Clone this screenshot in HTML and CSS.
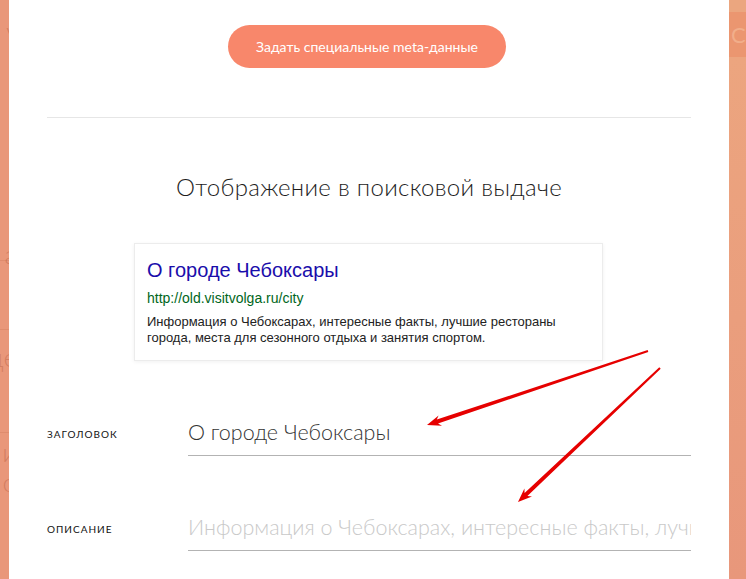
FILE: index.html
```html
<!DOCTYPE html>
<html lang="ru">
<head>
    <meta charset="UTF-8">
    <meta name="viewport" content="width=device-width, initial-scale=1.0">
    <title>Meta-данные страницы</title>
    <link rel="stylesheet" href="styles.css">
</head>
<body>
    <!-- страница под модальным окном -->
    <div class="backdrop">
        <div class="bd-left">
            <span class="bd-word bd-word-top">у</span>
            <span class="bd-rule" style="margin-top: 214px"></span>
            <span class="bd-word" style="margin-top: -22px">а</span>
            <span class="bd-rule" style="margin-top: 60px"></span>
            <span class="bd-word" style="margin-top: 12px">де</span>
            <span class="bd-rule" style="margin-top: 60px"></span>
            <span class="bd-word" style="margin-top: 4px">и</span>
            <span class="bd-word" style="margin-top: 0">о</span>
        </div>
        <div class="bd-right">
            <div class="bd-cap"></div>
            <div class="bd-band">Со</div>
            <div class="bd-rest"></div>
        </div>
    </div>

    <div class="modal">
        <div class="modal-top">
            <button class="meta-button" type="button">Задать специальные meta-данные</button>
        </div>
        <hr class="divider">
        <h2 class="section-title">Отображение в поисковой выдаче</h2>

        <!-- превью сниппета -->
        <div class="snippet">
            <a class="snippet-title" href="#">О городе Чебоксары</a>
            <div class="snippet-url">http://old.visitvolga.ru/city</div>
            <p class="snippet-text">Информация о Чебоксарах, интересные факты, лучшие рестораны города, места для сезонного отдыха и занятия спортом.</p>
        </div>

        <form class="meta-form">
            <label class="field-label" for="metaTitle">Заголовок</label>
            <input class="field-input" type="text" id="metaTitle" value="О городе Чебоксары">

            <label class="field-label" for="metaDescription">Описание</label>
            <input class="field-input" type="text" id="metaDescription" placeholder="Информация о Чебоксарах, интересные факты, лучшие рестораны города">
        </form>
    </div>

    <!-- стрелки поверх скриншота -->
    <svg class="arrows" width="746" height="579" viewBox="0 0 746 579">
        <polygon fill="#e60000" points="647.7,350.1 436.8,419.6 438.6,415.4 427,425 442.0,425.8 438.0,423.4 648.3,352.0"/>
        <polygon fill="#e60000" points="659.3,367.3 524.6,493.0 524.4,488.4 518,502 532.0,496.4 527.4,496.0 660.7,368.7"/>
    </svg>
</body>
</html>
```

FILE: styles.css
```css
body {
    margin: 0;
    padding: 0;
    position: relative;
    height: 579px;
    overflow: hidden;
    background-color: #e9977a;
    font-family: "Lato", "Open Sans", sans-serif;
    color: #222;
}
.backdrop {
    display: flex;
    justify-content: space-between;
    height: 579px;
}
.bd-left {
    width: 9px;
    overflow: hidden;
    display: flex;
    flex-direction: column;
    align-items: flex-end;
    background-color: #e9977a;
}
.bd-word {
    font-size: 26px;
    font-weight: 300;
    line-height: 30px;
    color: rgba(170, 80, 50, 0.35);
    margin-right: -8px;
}
.bd-word-top {
    margin-top: 16px;
    margin-right: -10px;
}
.bd-rule {
    display: block;
    width: 9px;
    height: 1px;
    background-color: rgba(170, 80, 50, 0.15);
}
.bd-right {
    width: 17px;
    display: flex;
    flex-direction: column;
}
.bd-cap {
    height: 12px;
    background-color: #eba67f;
}
.bd-band {
    height: 45px;
    background-color: #eb9670;
    color: rgba(255, 220, 190, 0.35);
    font-size: 22px;
    line-height: 45px;
    padding-left: 2px;
    overflow: hidden;
    white-space: nowrap;
}
.bd-rest {
    flex: 1;
    background: linear-gradient(#eca57f, #e8977b);
}
.modal {
    position: absolute;
    top: 0;
    left: 9px;
    width: 720px;
    height: 579px;
    box-sizing: border-box;
    padding: 25px 38px 0;
    background-color: white;
    overflow: hidden;
}
.modal-top {
    display: flex;
    justify-content: center;
}
.meta-button {
    width: 278px;
    height: 43px;
    margin-left: -4px;
    border: none;
    border-radius: 22px;
    background-color: #f8876b;
    color: white;
    font-family: "Lato", sans-serif;
    font-size: 14px;
    cursor: pointer;
}
.divider {
    border: none;
    border-top: 1px solid #e6e6e6;
    margin: 49px 0 0;
}
.section-title {
    margin: 54px 0 0;
    font-size: 24px;
    font-weight: 300;
    line-height: 30px;
    letter-spacing: 0.3px;
    text-align: center;
    color: #1d1d1d;
}
.snippet {
    width: 469px;
    margin: 41px 0 0 87px;
    padding: 15px 12px 14px;
    box-sizing: border-box;
    border: 1px solid #ececec;
    box-shadow: 0 1px 4px rgba(0, 0, 0, 0.06);
    font-family: "Liberation Sans", Arial, sans-serif;
}
.snippet-title {
    display: block;
    font-size: 20px;
    line-height: 22px;
    color: #1a0dab;
    text-decoration: none;
}
.snippet-url {
    margin-top: 9px;
    font-size: 14px;
    line-height: 16px;
    color: #006621;
}
.snippet-text {
    margin: 8px 0 0;
    font-size: 13px;
    line-height: 16px;
    color: #222;
}
.meta-form {
    display: grid;
    grid-template-columns: 141px 1fr;
    row-gap: 55px;
    align-items: center;
    margin-top: 55px;
}
.field-label {
    padding-bottom: 5px;
    font-size: 10px;
    letter-spacing: 1px;
    text-transform: uppercase;
    color: #111;
}
.field-input {
    height: 40px;
    padding: 0 0 8px;
    box-sizing: border-box;
    border: none;
    border-bottom: 1px solid #b3b3b3;
    font-family: "Lato", sans-serif;
    font-size: 21.5px;
    font-weight: 300;
    color: #333;
    outline: none;
    width: 100%;
}
.field-input::placeholder {
    color: #c9c9c9;
}
.arrows {
    position: absolute;
    top: 0;
    left: 0;
    pointer-events: none;
}
```
